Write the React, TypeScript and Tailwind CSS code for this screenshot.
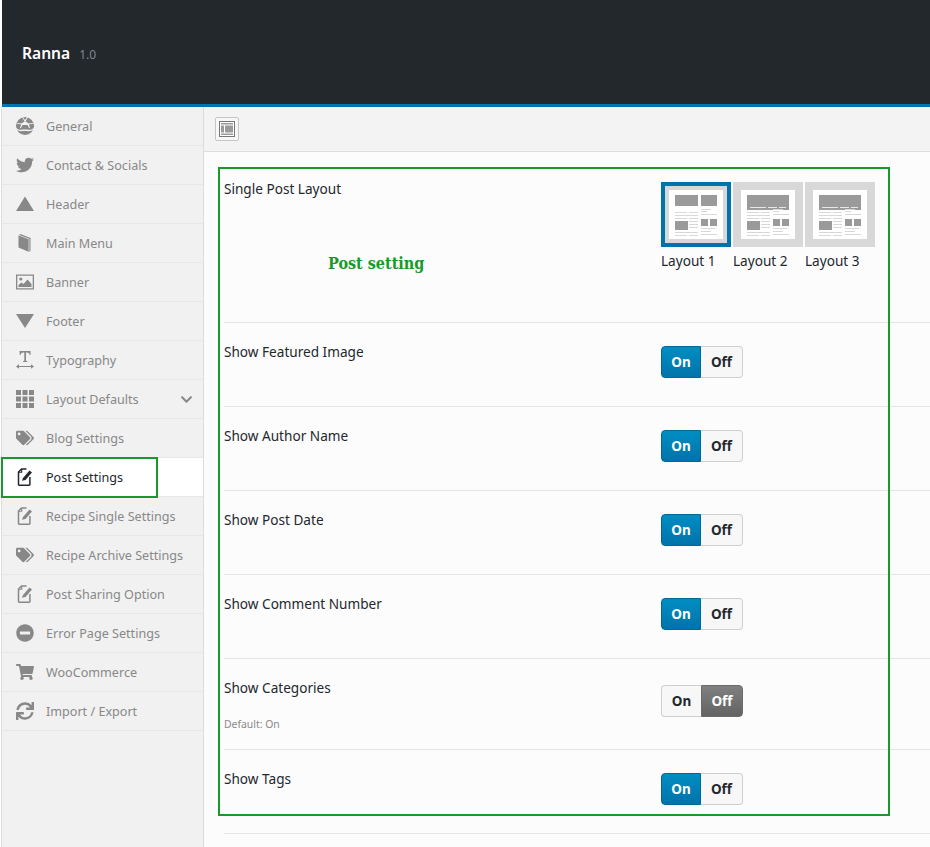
import type { ReactNode } from "react"
import { FaChevronDown, FaMinusCircle, FaShoppingCart, FaSync, FaTags, FaTwitter } from "react-icons/fa"

const GlobeIcon = () => (
  <svg viewBox="0 0 18 18" className="w-[18px] h-[18px]" fill="currentColor">
    <circle cx="9" cy="9" r="9" />
    <path d="M0 10.800c3 3 6 1.800 9 1.800s6 1.200 9-1.800v1.300c-3 3-6 1.900-9 1.900s-6 1.100-9-1.900z" fill="#f1f1f1" />
    <path d="M6.800 0 9 3l2.200-3 .8.300L9.500 4.500l3.500 2 4.800-.8.200.8-5 1L14 11l-.8.300L11.500 8h-5l-1.700 3.300L4 11l1.200-3.500-5-1 .2-.8 4.800.8 3.500-2L6 .300z" fill="#f1f1f1" />
  </svg>
)

const TriangleUp = () => (
  <svg viewBox="0 0 18 18" className="w-[18px] h-[18px]" fill="currentColor">
    <path d="M9 1.500 18 16H0z" />
  </svg>
)

const TriangleDown = () => (
  <svg viewBox="0 0 18 18" className="w-[18px] h-[18px]" fill="currentColor">
    <path d="M0 2h18L9 16z" />
  </svg>
)

const BookIcon = () => (
  <svg viewBox="0 0 18 18" className="w-[18px] h-[18px]" fill="currentColor">
    <path d="M2.500 1.500 4.500 0l10 4v13l-1.500 1-10.500-4.500z" />
    <path d="M13 5v13M13 5 3 1.300" stroke="#f1f1f1" strokeWidth="0.700" fill="none" />
  </svg>
)

const ImageIcon = () => (
  <svg viewBox="0 0 18 18" className="w-[18px] h-[18px]" fill="currentColor">
    <path d="M0 1.500h18v15H0zm1.300 1.300v12.400h15.400V2.800z" />
    <circle cx="4.800" cy="6" r="1.600" />
    <path d="M2.500 14v-2l3-2.500 2 1.500 4-4.500 4 4.500V14z" />
  </svg>
)

const TypographyIcon = () => (
  <svg viewBox="0 0 18 18" className="w-[18px] h-[18px]" fill="currentColor">
    <path d="M3.500 0h11v4h-.8c-.2-1.600-.8-2.500-2.700-2.500h-1v8.300l1.300.400v.800H7v-.800l1.300-.400V1.500h-1c-1.900 0-2.500.900-2.700 2.500h-.800z" />
    <path d="M0 15.500 3 13.300v1.700h12v-1.700l3 2.200-3 2.200V16H3v1.700z" />
  </svg>
)

const GridIcon = () => (
  <svg viewBox="0 0 18 18" className="w-[18px] h-[18px]" fill="currentColor">
    <path d="M0 0h5v5H0zM6.500 0h5v5h-5zM13 0h5v5h-5zM0 6.500h5v5H0zM6.500 6.500h5v5h-5zM13 6.500h5v5h-5zM0 13h5v5H0zM6.500 13h5v5h-5zM13 13h5v5h-5z" />
  </svg>
)

const NoteIcon = () => (
  <svg viewBox="0 0 18 18" className="w-[18px] h-[18px]" fill="none" stroke="currentColor">
    <path d="M10.500 1H5.500L2.500 4v12.500q0 .7.700.7h10q.7 0 .7-.7V9" strokeWidth="1.500" />
    <path d="M5.700 1v3.300H2.500" strokeWidth="1.100" />
    <path d="M6 12.800 7 10l6.500-7.500L16 4.500l-6.500 7.500z" fill="currentColor" stroke="none" />
  </svg>
)

type Item = { label: string; icon: ReactNode; active?: boolean; chevron?: boolean }

const menu: Item[] = [
  { label: "General", icon: <GlobeIcon /> },
  { label: "Contact & Socials", icon: <FaTwitter className="w-[18px] h-[18px]" /> },
  { label: "Header", icon: <TriangleUp /> },
  { label: "Main Menu", icon: <BookIcon /> },
  { label: "Banner", icon: <ImageIcon /> },
  { label: "Footer", icon: <TriangleDown /> },
  { label: "Typography", icon: <TypographyIcon /> },
  { label: "Layout Defaults", icon: <GridIcon />, chevron: true },
  { label: "Blog Settings", icon: <FaTags className="w-[18px] h-[18px]" /> },
  { label: "Post Settings", icon: <NoteIcon />, active: true },
  { label: "Recipe Single Settings", icon: <NoteIcon /> },
  { label: "Recipe Archive Settings", icon: <FaTags className="w-[18px] h-[18px]" /> },
  { label: "Post Sharing Option", icon: <NoteIcon /> },
  { label: "Error Page Settings", icon: <FaMinusCircle className="w-[18px] h-[18px]" /> },
  { label: "WooCommerce", icon: <FaShoppingCart className="w-[18px] h-[18px]" /> },
  { label: "Import / Export", icon: <FaSync className="w-[18px] h-[18px]" /> },
]

function Sidebar() {
  return (
    <aside className="w-[203px] shrink-0 bg-[#f1f1f1] border-l border-r border-[#dcdcdc]">
      {menu.map((item) => (
        <div
          key={item.label}
          className={`h-[39px] flex items-center pl-[14px] pr-[10px] border-b border-[#e7e7e7] ${
            item.active ? "bg-white text-[#23282d]" : "text-[#888888]"
          }`}
        >
          <span className="w-[18px] h-[18px] flex items-center justify-center shrink-0">{item.icon}</span>
          <span className="ml-[12px] mt-[2px] text-[12.6px] grow whitespace-nowrap">{item.label}</span>
          {item.chevron && <FaChevronDown className="w-[13px] h-[13px] text-[#888888]" />}
        </div>
      ))}
    </aside>
  )
}

function LayoutThumb({ wide, selected, label }: { wide: boolean; selected?: boolean; label: string }) {
  const c = "#9a9a9a"
  const l = "#d8d8d8"
  return (
    <div className="w-[70px]">
      <div className={`w-[70px] h-[65px] ${selected ? "border-4 border-[#0073aa]" : ""}`}>
        <svg viewBox={selected ? "4 4 62 57" : "0 0 70 65"} className="block w-full h-full">
          <rect width="70" height="65" fill="#d8d8d8" />
          <rect x="8" y="8" width="54" height="49" fill="#ffffff" />
          {wide ? (
            <>
              <rect x="14" y="13" width="42" height="15" fill={c} />
              <path d="M17 25.500h16M35 25.500h9M46 25.500h7" stroke="#e8e8e8" strokeWidth="1" />
            </>
          ) : (
            <>
              <rect x="14" y="13" width="23" height="11" fill={c} />
              <rect x="40" y="13" width="16" height="11" fill={c} />
            </>
          )}
          <path
            d="M14 30.500h12M28 30.500h9M14 33.500h23M14 36.500h12M28 36.500h9M28 39.500h9M28 42.500h9M28 45.500h9M14 50.500h23M14 53.500h12M28 53.500h9"
            stroke={l}
            strokeWidth="1"
          />
          <rect x="14" y="39" width="13" height="9" fill={c} />
          <path d="M40 27.500h10M40 29.500h6M40 32.500h16M40 46.500h14M40 49.500h10M40 52.500h16" stroke={l} strokeWidth="1" />
          <rect x="40" y="37" width="7" height="7" fill={c} />
          <rect x="49" y="37" width="7" height="7" fill={c} />
        </svg>
      </div>
      <div className="mt-[5px] text-[13.6px] leading-[18px] text-[#23282d] whitespace-nowrap">{label}</div>
    </div>
  )
}

function Toggle({ on, low }: { on: boolean; low?: boolean }) {
  return (
    <div className={`${low ? "mt-[7px]" : "mt-[4px]"} flex w-[82px] h-[32px] text-[13.5px] font-bold leading-[30px] text-center`}>
      <div
        className={`w-[40px] rounded-l-[4px] border ${
          on
            ? "bg-gradient-to-b from-[#008ec2] to-[#0073aa] border-[#006799] text-white"
            : "bg-[#f7f7f7] border-[#cfcfcf] border-r-0 text-[#23282d]"
        }`}
      >
        On
      </div>
      <div
        className={`w-[42px] rounded-r-[4px] border ${
          on
            ? "bg-[#f7f7f7] border-[#cfcfcf] border-l-0 text-[#23282d]"
            : "bg-gradient-to-b from-[#808080] to-[#636363] border-[#6b6b6b] text-white"
        }`}
      >
        Off
      </div>
    </div>
  )
}

function Row({ label, on, note }: { label: string; on: boolean; note?: string }) {
  return (
    <div className={`flex border-b border-[#e5e5e5] pt-[19px] ${note ? "h-[91px]" : "h-[84px]"}`}>
      <div className="w-[437px] shrink-0">
        <div className="text-[13.6px] leading-5 text-[#23282d]">{label}</div>
        {note && <div className="mt-[18px] text-[10.4px] leading-[16px] text-[#8a8a8a]">{note}</div>}
      </div>
      <Toggle on={on} low={!!note} />
    </div>
  )
}

export default function App() {
  return (
    <div
      className="relative h-[847px] overflow-hidden bg-white pl-px"
      style={{ fontFamily: "'Noto Sans', 'Open Sans', sans-serif" }}
    >
      <header className="ml-px h-[107px] bg-[#23282d] border-b-[3px] border-[#0073aa] flex items-center pl-[20px] pt-[3px]">
        <span className="text-[15.6px] font-semibold text-white">Ranna</span>
        <span className="ml-[9px] mt-[2px] text-[12px] text-[#7f878c]">1.0</span>
      </header>

      <div className="flex h-[740px]">
        <Sidebar />
        <main className="grow bg-[#fcfcfc]">
          <div className="h-[45px] bg-[#f3f3f3] border-b border-[#dedede] pl-[11px] pt-[10px]">
            <button className="w-[24px] h-[24px] flex items-center justify-center border border-[#c6c6c6] rounded-[2px] bg-[#f7f7f7]">
              <svg viewBox="0 0 16 16" className="w-[16px] h-[16px]">
                <rect x="0.500" y="0.500" width="15" height="15" fill="#ffffff" stroke="#777777" />
                <rect x="2" y="2" width="12" height="1.500" fill="#9a9a9a" />
                <rect x="2" y="12.500" width="12" height="1.500" fill="#9a9a9a" />
                <rect x="2" y="4.500" width="3" height="7" fill="#9a9a9a" />
                <rect x="6" y="4.500" width="8" height="7" fill="#9a9a9a" />
              </svg>
            </button>
          </div>

          <div className="pl-[20px]">
            <div className="flex h-[171px] border-b border-[#e5e5e5] pt-[27px]">
              <div className="w-[437px] shrink-0 text-[13.6px] leading-5 text-[#23282d]">Single Post Layout</div>
              <div className="flex gap-[2px] pt-[3px]">
                <LayoutThumb wide={false} selected label="Layout 1" />
                <LayoutThumb wide label="Layout 2" />
                <LayoutThumb wide label="Layout 3" />
              </div>
            </div>
            <Row label="Show Featured Image" on />
            <Row label="Show Author Name" on />
            <Row label="Show Post Date" on />
            <Row label="Show Comment Number" on />
            <Row label="Show Categories" on={false} note="Default: On" />
            <Row label="Show Tags" on />
          </div>
        </main>
      </div>

      {/* annotations drawn on top of the screenshot */}
      <div className="absolute left-[218px] top-[167px] w-[672px] h-[649px] border-2 border-[#179a2b]" />
      <div className="absolute left-[1px] top-[457px] w-[157px] h-[41px] border-2 border-[#179a2b]" />
      <div
        className="absolute left-[328px] top-[253px] text-[16px] leading-[22px] font-bold text-[#179a2b] whitespace-nowrap"
        style={{ fontFamily: "'DejaVu Serif Condensed', 'DejaVu Serif', serif" }}
      >
        Post setting
      </div>
    </div>
  )
}
